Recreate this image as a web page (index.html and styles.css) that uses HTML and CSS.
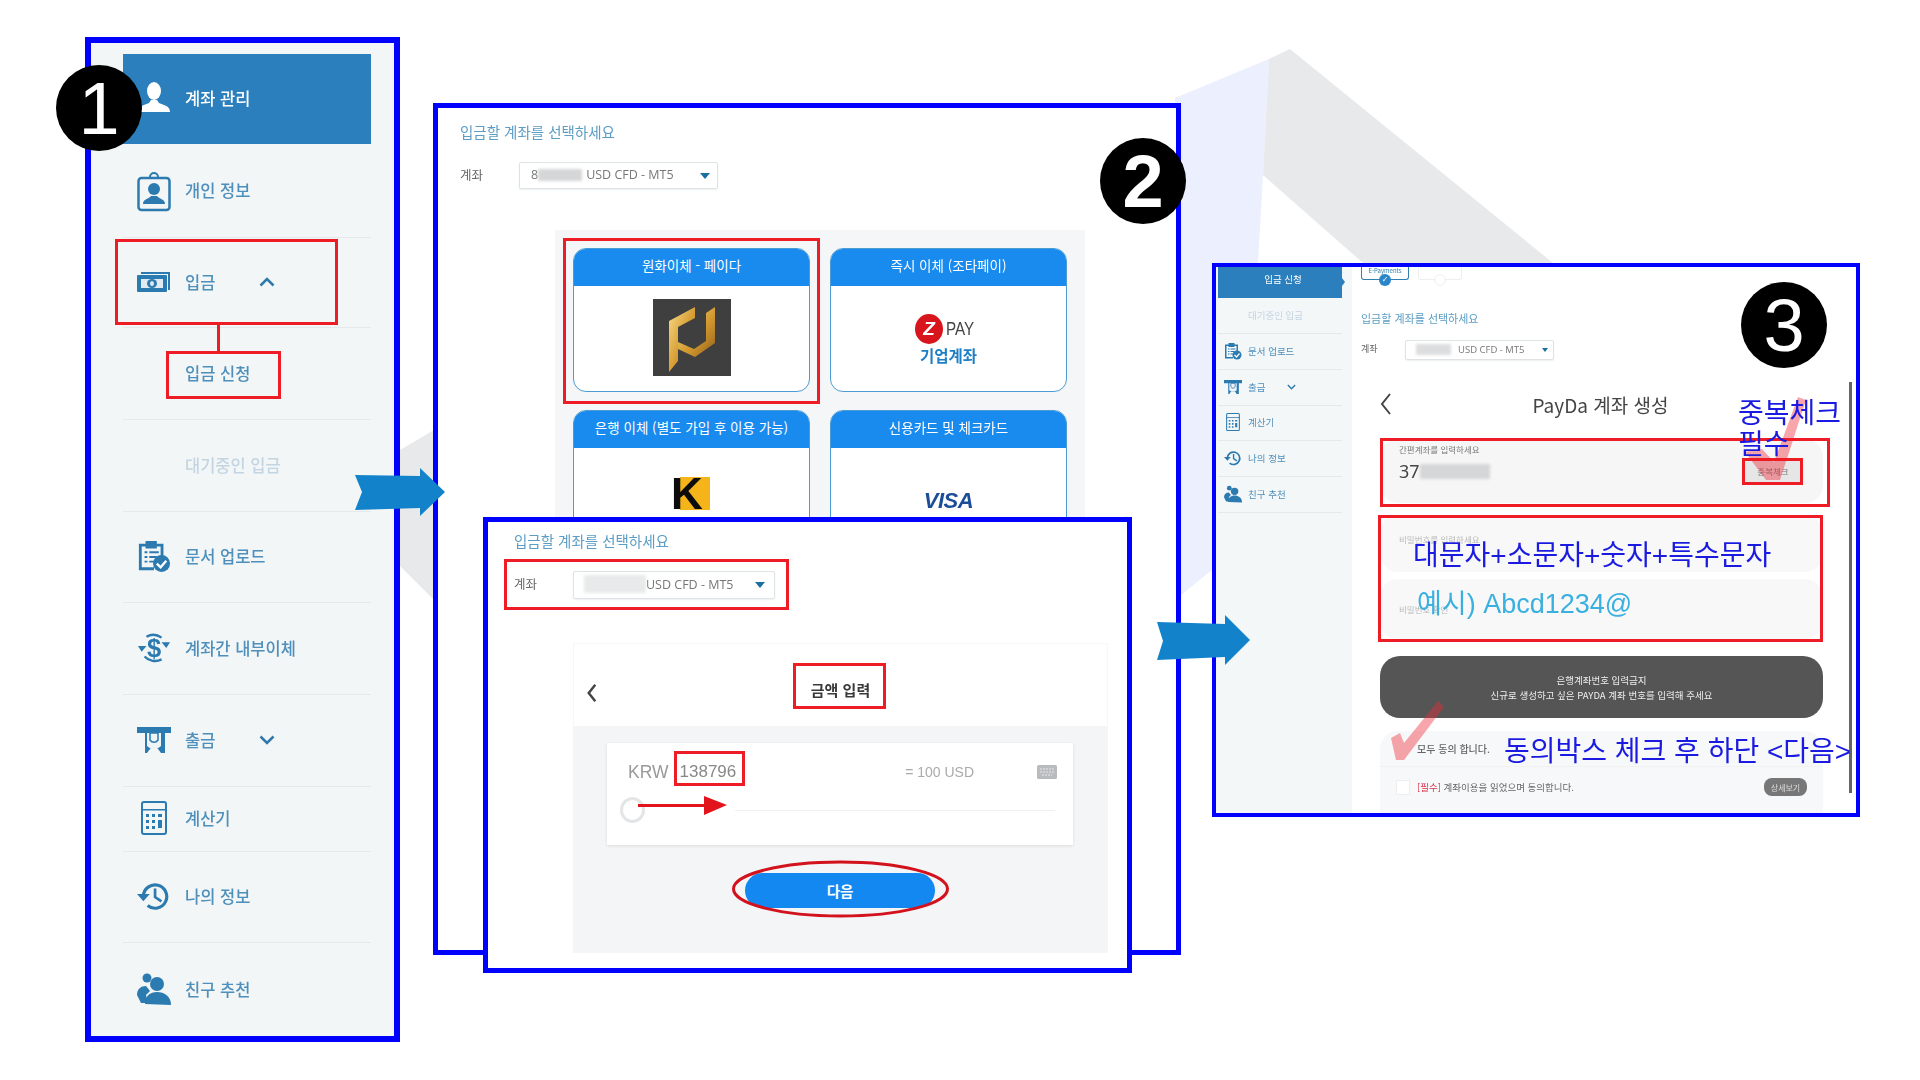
FILE: index.html
```html
<!DOCTYPE html>
<html lang="ko">
<head>
<meta charset="utf-8">
<title>입금 안내</title>
<link rel="stylesheet" href="styles.css">
</head>
<body>
<svg class="sprite" width="0" height="0" aria-hidden="true">
  <defs>
    <linearGradient id="gold" x1="0" y1="0" x2="1" y2="1">
      <stop offset="0" stop-color="#f8dc86"/><stop offset=".55" stop-color="#d49a30"/><stop offset="1" stop-color="#95621a"/>
    </linearGradient>
    <symbol id="i-user" viewBox="0 0 34 34"><ellipse cx="17" cy="10" rx="7" ry="9"/><path d="M1 31c0-6 6-7 11-9l2-3h6l2 3c5 2 11 3 11 9z"/></symbol>
    <symbol id="i-id" viewBox="0 0 34 42"><path d="M13 7a4 4 0 1 1 8 0" fill="none" stroke="currentColor" stroke-width="2"/><rect x="1.500" y="8" width="31" height="32" rx="3" fill="none" stroke="currentColor" stroke-width="2.500"/><circle cx="17" cy="19" r="6"/><path d="M6 34c0-5 6-5 8-8h6c2 3 8 3 8 8z"/></symbol>
    <symbol id="i-money" viewBox="0 0 34 22"><path d="M4 1h29v18h-2V3H4z"/><rect x="0" y="4" width="30" height="17" rx="1"/><rect x="4" y="8" width="22" height="9" fill="#dfeaf2"/><ellipse cx="15" cy="12.500" rx="5" ry="4.500"/><ellipse cx="15" cy="12.500" rx="2" ry="2.500" fill="#dfeaf2"/></symbol>
    <symbol id="i-doc" viewBox="0 0 36 36"><path d="M2 5h7V2h12v3h7v15h-3V8h-4v2H9V8H5v22h13v3H2z"/><path d="M8 13h3v2H8zm5 0h10v2H13zM8 18h3v2H8zm5 0h8v2h-8zM8 23h3v2H8zm5 0h5v2h-5z"/><circle cx="26" cy="26" r="9"/><path d="M21 26l4 4 6-7" fill="none" stroke="#fff" stroke-width="2.500"/></symbol>
    <symbol id="i-swap" viewBox="0 0 36 34"><path d="M10 5a15 15 0 0 1 16 1M26 29a15 15 0 0 1-18-3" fill="none" stroke="currentColor" stroke-width="2.500"/><path d="M26 12h9l-4 6zM1 16h9l-5 6z" transform="translate(0 -1)"/><text x="18" y="27" text-anchor="middle" class="dollar">$</text></symbol>
    <symbol id="i-atm" viewBox="0 0 34 26"><path d="M0 0h34v6h-6v20h-4l-3-4H13l-3 4H8V6H0z"/><path d="M10 6h14v13l-4 3h-6l-4-3z" fill="#eef3f6"/><path d="M13 6v7c2 3 6 3 8 0V6z" fill="none" stroke="currentColor" stroke-width="1.500"/></symbol>
    <symbol id="i-calc" viewBox="0 0 26 34"><rect x="1" y="1" width="24" height="32" rx="2" fill="none" stroke="currentColor" stroke-width="2"/><rect x="1" y="8" width="24" height="1.500"/><path d="M5 13h3v3H5zm6 0h3v3h-3zm6 0h4v3h-4zM5 19h3v3H5zm6 0h3v3h-3zm6 0h4v8h-4zM5 25h3v3H5zm6 0h3v3h-3z"/></symbol>
    <symbol id="i-hist" viewBox="0 0 32 28"><path d="M6 14a11 11 0 1 1 4 9" fill="none" stroke="currentColor" stroke-width="3"/><path d="M0 12h12l-6 7z"/><path d="M17 7v8l6 4" fill="none" stroke="currentColor" stroke-width="2.500"/></symbol>
    <symbol id="i-friends" viewBox="0 0 34 32"><circle cx="10" cy="5" r="4.500"/><circle cx="20" cy="11" r="7"/><path d="M0 22c0-6 4-9 9-9l4 5-4 4 2 8H4z"/><path d="M8 31c0-8 5-12 12-12s14 4 14 13z"/></symbol>
    <symbol id="i-chev" viewBox="0 0 16 10"><path d="M1.500 1.500L8 8l6.500-6.500" fill="none" stroke="currentColor" stroke-width="2.500"/></symbol>
    <symbol id="i-back" viewBox="0 0 12 22"><path d="M10 1L2 11l8 10" fill="none" stroke="currentColor"/></symbol>
  </defs>
</svg>

<main class="canvas">
  <svg class="backdrop" viewBox="0 0 1920 1080" aria-hidden="true">
    <polygon class="bg-pale" points="1175,98 1269,59 1263,175 1258,263 1212,263 1212,570 1175,600"/>
    <polygon class="bg-gray" points="1269,59 1290,49 1553,263 1363,263 1263,175"/>
    <polygon class="bg-gray" points="400,450 434,430 434,600 400,566"/>
  </svg>

  <!-- Panel 1 -->
  <section class="panel panel-a">
    <nav class="side side-a">
      <a class="side-row h90 on"><svg class="ico"><use href="#i-user"/></svg><span>계좌 관리</span></a>
      <a class="side-row h94 line"><svg class="ico tall"><use href="#i-id"/></svg><span>개인 정보</span></a>
      <a class="side-row h90 line"><svg class="ico"><use href="#i-money"/></svg><span>입금</span><svg class="chev up"><use href="#i-chev"/></svg></a>
      <a class="side-row h92 line"><i class="ico"></i><span>입금 신청</span></a>
      <a class="side-row h92 line"><i class="ico"></i><span class="faint">대기중인 입금</span></a>
      <a class="side-row h91 line"><svg class="ico"><use href="#i-doc"/></svg><span>문서 업로드</span></a>
      <a class="side-row h92 line"><svg class="ico"><use href="#i-swap"/></svg><span>계좌간 내부이체</span></a>
      <a class="side-row h92 line"><svg class="ico"><use href="#i-atm"/></svg><span>출금</span><svg class="chev"><use href="#i-chev"/></svg></a>
      <a class="side-row h65 line"><svg class="ico"><use href="#i-calc"/></svg><span>계산기</span></a>
      <a class="side-row h91 line"><svg class="ico"><use href="#i-hist"/></svg><span>나의 정보</span></a>
      <a class="side-row h93"><svg class="ico"><use href="#i-friends"/></svg><span>친구 추천</span></a>
    </nav>
  </section>

  <!-- Panel 2 -->
  <section class="panel panel-b">
    <div class="shot shot-b">
      <h2 class="pick-title">입금할 계좌를 선택하세요</h2>
      <div class="acct">
        <label class="acct-label">계좌</label>
        <div class="select"><span class="sel-lead">8</span><i class="smudge s-b"></i><span>USD CFD - MT5</span><b class="caret"></b></div>
      </div>
      <div class="methods">
        <article class="method"><h3>원화이체 - 페이다</h3>
          <div class="method-body">
            <svg class="payda" viewBox="0 0 78 77"><rect width="78" height="77" fill="#3f3f3f"/><path d="M16 22L42 8v11l-17 9v34l-9 11z" fill="url(#gold)"/><path d="M62 8v36L42 58 25 50v-7l16 7 12-8V14z" fill="url(#gold)"/></svg>
          </div>
        </article>
        <article class="method"><h3>즉시 이체 (조타페이)</h3>
          <div class="method-body col">
            <div class="zpay"><span class="z-dot">Z</span><span class="z-pay">PAY</span></div>
            <div class="z-sub">기업계좌</div>
          </div>
        </article>
        <article class="method"><h3>은행 이체 (별도 가입 후 이용 가능)</h3>
          <div class="method-body top"><div class="klogo"><span>K</span></div></div>
        </article>
        <article class="method"><h3>신용카드 및 체크카드</h3>
          <div class="method-body top"><div class="visa">VISA</div></div>
        </article>
      </div>
    </div>
  </section>

  <!-- Panel 2 overlay -->
  <section class="panel panel-c">
    <div class="shot shot-c">
      <h2 class="pick-title">입금할 계좌를 선택하세요</h2>
      <div class="acct acct-c">
        <label class="acct-label">계좌</label>
        <div class="select select-c"><i class="smudge s-c"></i><span>USD CFD - MT5</span><b class="caret"></b></div>
      </div>
      <div class="amount">
        <div class="amount-head">
          <svg class="back"><use href="#i-back"/></svg>
          <h3>금액 입력</h3>
        </div>
        <div class="amount-body">
          <div class="amount-card">
            <div class="amount-row">
              <span class="krw">KRW</span><span class="num">138796</span>
              <span class="usd">= 100 USD</span>
              <svg class="kbd" viewBox="0 0 20 14"><rect width="20" height="14" rx="1.500" fill="#b9bcbe"/><path d="M3 4h14M3 7h14M5 10h10" stroke="#e8e8e8" stroke-dasharray="2 1"/></svg>
            </div>
            <div class="slider"><i class="knob"></i><i class="track"></i></div>
          </div>
          <button class="next">다음</button>
        </div>
      </div>
    </div>
  </section>

  <!-- Panel 3 -->
  <section class="panel panel-d">
    <div class="shot shot-d">
      <nav class="side side-d">
        <a class="side-row mini r31 on center"><span>입금 신청</span></a>
        <a class="side-row mini r36 line"><i class="ico"></i><span class="faint">대기중인 입금</span></a>
        <a class="side-row mini r36 line"><svg class="ico"><use href="#i-doc"/></svg><span>문서 업로드</span></a>
        <a class="side-row mini r36 line"><svg class="ico"><use href="#i-atm"/></svg><span>출금</span><svg class="chev"><use href="#i-chev"/></svg></a>
        <a class="side-row mini r35 line"><svg class="ico"><use href="#i-calc"/></svg><span>계산기</span></a>
        <a class="side-row mini r36 line"><svg class="ico"><use href="#i-hist"/></svg><span>나의 정보</span></a>
        <a class="side-row mini r36 line"><svg class="ico"><use href="#i-friends"/></svg><span>친구 추천</span></a>
      </nav>
      <div class="pay">
        <div class="tabs">
          <div class="tab on-tab"><span>E-Payments</span><i class="tick">✓</i></div>
          <div class="tab off-tab"><i class="tick off"></i></div>
        </div>
        <h2 class="pick-title small">입금할 계좌를 선택하세요</h2>
        <div class="acct acct-d">
          <label class="acct-label">계좌</label>
          <div class="select select-d"><i class="smudge s-d"></i><span>USD CFD - MT5</span><b class="caret"></b></div>
        </div>
        <div class="create">
          <div class="create-head">
            <svg class="back back-lg"><use href="#i-back"/></svg>
            <h3>PayDa 계좌 생성</h3>
          </div>
          <div class="stack">
            <div class="field f1">
              <div>
                <p class="f-label">간편계좌를 입력하세요</p>
                <p class="f-val">37<i class="smudge s-v"></i></p>
              </div>
              <button class="dup">중복체크</button>
            </div>
            <div class="field f2"><p class="f-label pale">비밀번호를 입력하세요</p></div>
            <div class="field f3"><p class="f-label pale">비밀번호 확인</p></div>
            <div class="notice">
              <p>은행계좌번호 입력금지</p>
              <p>신규로 생성하고 싶은 PAYDA 계좌 번호를 입력해 주세요</p>
            </div>
            <div class="agree">
              <div class="agree-all">모두 동의 합니다.</div>
              <div class="agree-row"><i class="box"></i><span><em>[필수]</em> 계좌이용을 읽었으며 동의합니다.</span><button class="more">상세보기</button></div>
            </div>
          </div>
        </div>
      </div>
      <i class="scroll"></i>
    </div>
  </section>

  <!-- Annotations -->
  <svg class="marks" viewBox="0 0 1920 1080" aria-hidden="true">
    <polygon class="m-arrow" points="355,475 420,476 420,468 445,492 420,516 420,508 355,510 362,492"/>
    <polygon class="m-arrow" points="1157,622 1225,624 1225,615 1250,640 1225,665 1225,657 1157,660 1163,641"/>
    <rect class="m-line" x="217" y="325" width="3" height="26"/>
    <ellipse class="m-ellipse" cx="840.500" cy="889" rx="107" ry="27"/>
    <path class="m-red" d="M638 804h66v-8l23 9-23 10v-8h-66z"/>
    <polygon class="m-check" points="1745,452 1762,449 1774,462 1798,397 1806,400 1780,480 1766,480"/>
    <polygon class="m-check" points="1391,738 1400,733 1404,743 1438,701 1444,707 1404,760 1396,760"/>
  </svg>

  <i class="rbox r1"></i><i class="rbox r2"></i><i class="rbox r3"></i><i class="rbox r4"></i>
  <i class="rbox r5"></i><i class="rbox r6"></i><i class="rbox r7"></i><i class="rbox r8"></i><i class="rbox r9"></i>

  <div class="note n1">중복체크<br>필수</div>
  <div class="note n2">대문자+소문자+숫자+특수문자</div>
  <div class="note n3">예시) Abcd1234@</div>
  <div class="note n4">동의박스 체크 후 하단 &lt;다음&gt;</div>

  <div class="badge b1">1</div>
  <div class="badge b2">2</div>
  <div class="badge b3">3</div>
</main>
</body>
</html>
```

FILE: styles.css
```css
* { box-sizing: border-box; }
html, body { margin: 0; padding: 0; background: #fff; }
body { font-family: "Noto Sans CJK KR", "Noto Sans", sans-serif; }
h2, h3, p { margin: 0; font-weight: 400; }
.sprite { position: absolute; }
.canvas { position: relative; width: 1920px; height: 1080px; overflow: hidden; background: #fff; }
.backdrop, .marks { position: absolute; left: 0; top: 0; width: 1920px; height: 1080px; }
.bg-pale { fill: #eceffd; }
.bg-gray { fill: #e8e9ea; }

/* Panels on the free canvas */
.panel { position: absolute; border: 5px solid #0000ff; background: #fff; overflow: hidden; }
.panel-a { left: 85px; top: 37px; width: 315px; height: 1005px; border-width: 6px; background: #f3f6f7; }
.panel-b { left: 433px; top: 103px; width: 748px; height: 852px; border-width: 5px; }
.panel-c { left: 483px; top: 517px; width: 649px; height: 456px; }
.panel-d { left: 1212px; top: 263px; width: 648px; height: 554px; border-width: 4px; }
.shot { filter: blur(.45px); }

/* Sidebar */
.side { display: flex; flex-direction: column; }
.side-a { padding: 11px 0 0 32px; width: 280px; filter: blur(.45px); }
.side-row { display: flex; align-items: center; gap: 14px; padding: 0 0 3px 14px; color: #4e8fbb; font-size: 16.500px; font-weight: 500; border-top: 1px solid transparent; }
.side-row.line { border-bottom: 1px solid #e6e9ea; }
.side-row.on { background: #2b7fbc; color: #fff; }
.ico { width: 34px; height: 34px; fill: #2b7ab0; color: #2b7ab0; flex: none; display: block; }
.ico.tall { height: 42px; margin-top: 3px; }
.on .ico { fill: #fff; color: #fff; }
.faint { color: #c3d5e2; }
.chev { width: 16px; height: 10px; margin-left: 30px; color: #2f78ab; }
.chev.up { transform: rotate(180deg); }
.dollar { font: 700 27px "Liberation Sans", sans-serif; }
.h90 { height: 90px; } .h94 { height: 94px; } .h92 { height: 92px; } .h91 { height: 91px; }
.h65 { height: 65px; } .h93 { height: 93px; }

/* Account picker */
.shot-b { padding: 14px 0 0 22px; }
.pick-title { font-size: 14.500px; line-height: 20px; color: #5b9dc4; }
.acct { display: flex; align-items: center; margin-top: 20px; height: 27px; }
.acct-label { width: 59px; padding-bottom: 3px; font-size: 12.500px; color: #666; }
.select { position: relative; width: 199px; height: 100%; display: flex; align-items: center; padding: 0 0 2px 11px; gap: 4px; background: #fff; border: 1px solid #dfe3e5; border-radius: 2px; font: 12.500px "Open Sans", "Noto Sans", sans-serif; color: #777; box-shadow: 0 1px 2px #eceeef; }
.sel-lead { margin-right: -4px; }
.smudge { display: block; background: #d4d6d8; filter: blur(1.500px); }
.s-b { width: 44px; height: 12px; }
.caret { position: absolute; right: 7px; top: 50%; margin-top: -3px; border: 5px solid transparent; border-top: 6px solid #1a6f9f; border-bottom: 0; }

/* Method cards */
.methods { margin: 41px 0 0 95px; width: 530px; padding: 18px; background: #f4f6f7; display: grid; grid-template-columns: 237px 237px; gap: 18px 20px; }
.method { height: 144px; background: #fff; border: 1px solid #4c9bd2; border-radius: 13px; overflow: hidden; display: flex; flex-direction: column; }
.method h3 { height: 38px; flex: none; margin: -1px -1px 0; background: #1a8bee; color: #fff; font-size: 13.500px; line-height: 35px; text-align: center; font-weight: 400; }
.method-body { flex: 1; display: flex; align-items: center; justify-content: center; }
.method-body.col { flex-direction: column; }
.method-body.top { align-items: flex-start; padding-top: 29px; }
.payda { width: 78px; height: 77px; display: block; margin-top: -2px; }
.zpay { display: flex; align-items: center; gap: 3px; height: 30px; margin: 2px 6px 0 0; }
.z-dot { width: 28px; height: 30px; border-radius: 50%; background: #d8141c; color: #fff; font: italic 900 19px/30px "Liberation Sans", sans-serif; text-align: center; }
.z-pay { font: 400 19px "Liberation Sans", sans-serif; color: #444; transform: scaleX(.8); transform-origin: left; width: 30px; }
.z-sub { font-size: 15.500px; line-height: 22px; font-weight: 700; color: #1f7fc4; }
.klogo { width: 30px; height: 33px; margin-left: 7px; background: #f4b41a; position: relative; }
.klogo span { position: absolute; left: -9px; top: -3px; font: 700 44px/40px "Liberation Sans", sans-serif; color: #0c0c0c; }
.visa { margin-top: 13px; font: italic 700 22px/22px "Liberation Sans", sans-serif; color: #1c4d98; letter-spacing: -.5px; }

/* Amount overlay */
.shot-c { padding: 9px 0 0 26px; }
.acct-c { height: 28px; margin-top: 20px; }
.select-c { width: 202px; padding-left: 10px; gap: 0; font-size: 12.500px; }
.s-c { width: 62px; height: 18px; background: #e8e9ea; }
.select-c .caret { right: 9px; }
.amount { margin: 44px 0 0 59px; width: 535px; }
.amount-head { position: relative; height: 83px; display: flex; align-items: center; justify-content: center; padding-top: 8px; border: 1px solid #f7f7f7; border-bottom: 0; }
.amount-head h3 { font-size: 15px; font-weight: 700; color: #3a3a3a; }
.back { position: absolute; left: 13px; top: 40px; width: 10px; height: 18px; color: #444; stroke-width: 3; }
.amount-body { height: 227px; background: #f4f5f6; padding: 17px 35px 0 34px; display: flex; flex-direction: column; align-items: center; }
.amount-card { width: 466px; height: 102px; background: #fff; box-shadow: 0 1px 3px #dcdcdc; padding: 16px 13px 0; flex: none; }
.amount-row { display: flex; align-items: center; height: 26px; padding-left: 8px; }
.krw { font: 17.500px "Liberation Sans", sans-serif; color: #999; }
.num { margin-left: 11px; font: 17px "Liberation Sans", sans-serif; color: #888; }
.usd { margin-left: auto; font: 14px "Liberation Sans", sans-serif; color: #aaa; }
.kbd { width: 20px; height: 14px; margin: 0 3px 0 63px; }
.slider { display: flex; align-items: center; height: 26px; margin-top: 12px; padding-right: 5px; }
.knob { width: 25px; height: 26px; border: 3px solid #e3e5e6; border-radius: 50%; background: #fff; flex: none; }
.track { flex: 1; height: 1px; margin-left: 90px; background: #f0f0f0; }
.next { width: 190px; height: 35px; margin-top: 28px; border: 0; border-radius: 18px; background: #1388f0; color: #fff; font: 700 14.500px "Noto Sans CJK KR", sans-serif; padding: 0; }

/* PayDa panel */
.shot-d { display: flex; height: 100%; position: relative; }
.side-d { width: 136px; height: 100%; background: #f4f7f8; padding-left: 2px; flex: none; }
.mini { width: 124px; padding: 0 0 3px 6px; gap: 6px; font-size: 9.500px; font-weight: 400; position: relative; }
.mini.on { border: 0; padding-bottom: 7px; }
.mini .ico { width: 18px; height: 18px; }
.mini .chev { width: 9px; height: 6px; margin-left: 16px; }
.center { justify-content: center; }
.mini.on::after { content: ""; position: absolute; right: -3px; top: 11px; border-left: 3px solid #2b7fbc; border-top: 4px solid transparent; border-bottom: 4px solid transparent; }
.r31 { height: 31px; } .r36 { height: 36px; } .r35 { height: 35px; }
.pay { flex: 1; padding-left: 9px; min-width: 0; }
.tabs { display: flex; gap: 9px; height: 13px; margin-bottom: 22px; box-shadow: 0 22px 0 -21px #eef0f1; }
.tab { position: relative; height: 13px; border: 1px solid #2f7fb0; border-top: 0; border-radius: 0 0 3px 3px; font-size: 6px; text-align: center; line-height: 8px; color: #2f7fb0; }
.on-tab { width: 48px; }
.off-tab { width: 44px; border-color: #eeeeee; }
.tick { position: absolute; left: 50%; top: 7px; margin-left: -6px; width: 12px; height: 12px; border-radius: 50%; background: #2a86c8; color: #fff; font: 8px/12px "DejaVu Sans", sans-serif; text-align: center; }
.tick.off { background: #fff; border: 1px solid #eee; }
.pick-title.small { padding-top: 7px; font-size: 11px; line-height: 18px; }
.acct-d { height: 20px; margin-top: 13px; }
.acct-d .acct-label { width: 44px; font-size: 9px; }
.select-d { width: 149px; padding-left: 10px; gap: 7px; font-size: 9.500px; }
.s-d { width: 35px; height: 11px; background: #dcdddf; }
.select-d .caret { right: 5px; border-width: 3.500px; border-top-width: 4px; border-bottom-width: 0; margin-top: -2px; }
.create { margin-top: 19px; }
.create-head { position: relative; height: 50px; display: flex; align-items: center; justify-content: center; padding-right: 10px; }
.create-head h3 { font-size: 19px; color: #444; margin-right: 6px; }
.back-lg { left: 19px; top: 13px; width: 12px; height: 24px; color: #444; stroke-width: 2; }
.stack { margin: 10px 0 0 19px; width: 443px; display: flex; flex-direction: column; }
.field { background: #f6f6f6; border-radius: 18px; }
.f1 { height: 64px; display: flex; justify-content: space-between; padding: 5px 21px 0 19px; }
.f2 { height: 57px; margin-top: 12px; padding: 19px 0 0 19px; background: #f8f8f8; }
.f3 { height: 60px; margin-top: 7px; padding: 25px 0 0 19px; background: #f8f8f8; }
.f-label { font-size: 8.500px; line-height: 10px; color: #777; }
.f-label.pale { color: #b9b9b9; }
.f-val { display: flex; align-items: center; margin-top: 5px; height: 24px; font: 18px "Noto Sans", sans-serif; color: #444; }
.s-v { width: 70px; height: 15px; }
.dup { width: 58px; height: 25px; margin-top: 14px; padding: 0; border: 0; background: #e6e6e6; color: #777; font: 8.500px "Noto Sans CJK KR", sans-serif; }
.notice { height: 62px; margin-top: 17px; border-radius: 20px; background: #555; color: #eee; font-size: 9.500px; line-height: 15px; display: flex; flex-direction: column; justify-content: center; align-items: center; padding-top: 2px; }
.agree { margin-top: 13px; height: 85px; background: #f7f8f9; border-radius: 18px 18px 0 0; }
.agree-all { height: 35px; padding-left: 37px; display: flex; align-items: center; font-size: 10px; font-weight: 500; color: #666; }
.agree-row { display: flex; align-items: center; gap: 7px; padding: 11px 16px 0; border-top: 1px solid #f1f1f1; font-size: 9.500px; color: #666; }
.agree-row em { font-style: normal; color: #d8344a; }
.box { width: 14px; height: 15px; background: #fff; border: 1px solid #eee; }
.more { margin-left: auto; width: 43px; height: 18px; padding: 0; border: 0; border-radius: 8px; background: #777; color: #ddd; font: 8px "Noto Sans CJK KR", sans-serif; }
.scroll { position: absolute; right: 4px; top: 115px; width: 3px; height: 411px; background: #666; }

/* Annotations */
.m-arrow { fill: #1283cb; }
.m-line { fill: #ee1c25; }
.m-ellipse { fill: none; stroke: #d2121c; stroke-width: 3; }
.m-red { fill: #e2141c; }
.m-check { fill: #ee2a36; opacity: .42; }
.rbox { position: absolute; border: 3px solid #ee1c25; display: block; }
.r1 { left: 115px; top: 239px; width: 223px; height: 86px; }
.r2 { left: 166px; top: 351px; width: 115px; height: 48px; }
.r3 { left: 563px; top: 238px; width: 257px; height: 166px; }
.r4 { left: 504px; top: 559px; width: 285px; height: 51px; }
.r5 { left: 793px; top: 663px; width: 93px; height: 46px; }
.r6 { left: 674px; top: 751px; width: 71px; height: 35px; }
.r7 { left: 1380px; top: 438px; width: 450px; height: 69px; }
.r8 { left: 1742px; top: 458px; width: 61px; height: 27px; }
.r9 { left: 1378px; top: 515px; width: 445px; height: 127px; }
.note { position: absolute; font-family: "Liberation Sans", "Noto Sans CJK KR", sans-serif; color: #1a1ae0; white-space: nowrap; }
.n1 { left: 1738px; top: 398px; font-size: 28px; line-height: 31px; }
.n2 { left: 1413px; top: 536px; font-size: 28px; line-height: 40px; }
.n3 { left: 1417px; top: 584px; font-size: 27px; line-height: 40px; color: #3ab0e0; }
.n4 { left: 1504px; top: 732px; font-size: 28px; line-height: 40px; }
.badge { position: absolute; width: 86px; height: 86px; border-radius: 50%; background: #000; color: #fff; display: flex; align-items: center; justify-content: center; font: 400 74px "Liberation Sans", sans-serif; }
.b1 { left: 56px; top: 65px; }
.b2 { left: 1100px; top: 138px; font-weight: 700; }
.b3 { left: 1741px; top: 282px; }
```
